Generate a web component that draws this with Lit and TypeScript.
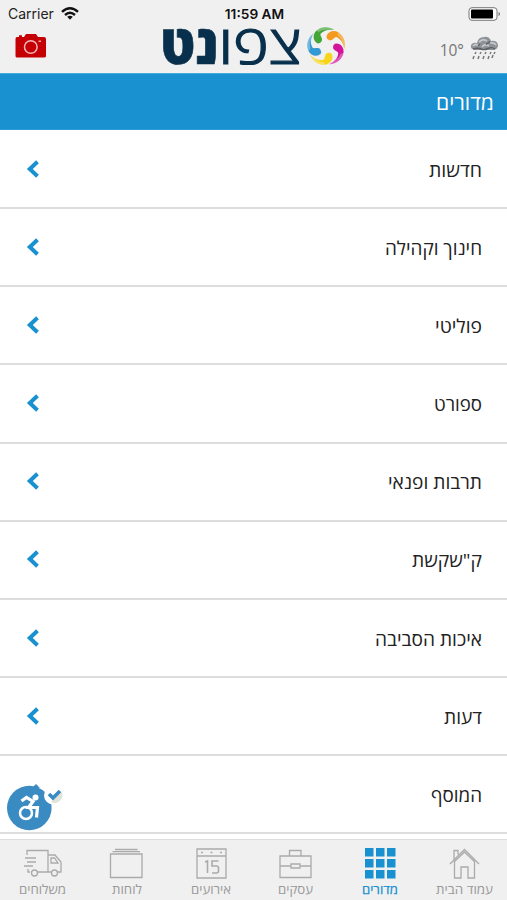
import { LitElement, html, css, svg } from "lit";
import { customElement } from "lit/decorators.js";
import { classMap } from "lit/directives/class-map.js";

const sections = [
  { name: "חדשות", w: 53 },
  { name: "חינוך וקהילה", w: 97 },
  { name: "פוליטי", w: 47 },
  { name: "ספורט", w: 48 },
  { name: "תרבות ופנאי", w: 94 },
  { name: "ק\"שקשת", w: 70 },
  { name: "איכות הסביבה", w: 107 },
  { name: "דעות", w: 38 },
  { name: "המוסף", w: 51 },
];

const cells = [0, 11, 22];

const icons = {
  home: svg`<path d="M5 20 19.500 5.500 34 20M9 16V6.500h4v4M9.500 17.500V34h6.500V23h7v11h6.500V17.500L19.500 8z"/>`,
  grid: svg`<g class="solid">${cells.map((y) => cells.map((x) => svg`<rect x=${x + 4} y=${y + 4} width="8.500" height="8.500"/>`))}</g>`,
  case: svg`<path d="M4 12h31v21.500H4zM13.500 12V6.500h11.500V12M4 22h11M24 22h11M15 20h9v4h-9z"/>`,
  calendar: svg`<path d="M5 5h29v29H5zM5 12h29M9 8.500h2M18.500 8.500h2M28 8.500h2"/><path d="M13 18l2.500-1v12M26.500 17H20v5h4.500q2 0 2 2v3q0 2-2 2H20" stroke-width="1.600"/>`,
  boards: svg`<path d="M3.500 10h31.500v23.500H3.500zM5.500 7.700h27.500M8 5.500h22.500"/>`,
  truck: svg`<path d="M4 11V6.500h21V28H14.500M25 11h7l6 7v10h-3.500M29 28h-4M28 14h3.500l3.500 5h-7zM7 28h-2v-3M2 14h11M4 18h9M1 22h9"/><circle cx="11.500" cy="29" r="3"/><circle cx="31.500" cy="29" r="3"/>`,
};

const tabs = [
  { name: "עמוד הבית", icon: icons.home, w: 57 },
  { name: "מדורים", icon: icons.grid, active: true, w: 36 },
  { name: "עסקים", icon: icons.case, w: 35 },
  { name: "אירועים", icon: icons.calendar, w: 40 },
  { name: "לוחות", icon: icons.boards, w: 30 },
  { name: "משלוחים", icon: icons.truck, w: 47 },
];

// Hebrew label condensed to a given width; the right edge is the anchor.
const label = (text: string, w: number, h: number, base: number) => html`
  <svg class="label" width=${w} height=${h} direction="rtl">
    <text x=${w} y=${base} textLength=${w} lengthAdjust="spacingAndGlyphs">${text}</text>
  </svg>`;

@customElement("app-root")
export class AppRoot extends LitElement {
  static styles = css`
    :host {
      display: flex;
      flex-direction: column;
      position: relative;
      box-sizing: border-box;
      height: 900px;
      overflow: hidden;
      background: #fff;
      font-family: "Open Sans", "Noto Sans", sans-serif;
      color: #222;
    }
    svg { display: block; overflow: visible; flex: none; }
    .top { flex: none; height: 73px; background: #f0f0f0; border-bottom: 1px solid #46abdf; }
    .status {
      display: grid;
      grid-template-columns: 1fr auto 1fr;
      align-items: center;
      height: 27px;
      padding: 0 7px 0 8px;
      font-family: Inter, sans-serif;
      font-size: 14px;
    }
    .carrier { display: flex; align-items: center; gap: 7px; }
    .time { font-weight: 600; font-size: 13.7px; color: #111; padding-left: 1px; }
    .battery { justify-self: end; }
    .brand {
      display: grid;
      grid-template-columns: 147px 183px 1fr;
      height: 46px;
      padding: 0 8px 0 15px;
    }
    .camera { margin-top: 6px; }
    .weather { display: flex; justify-content: flex-end; gap: 6px; padding-top: 9px; }
    .temp { font-size: 15.500px; line-height: 28px; color: #777; }
    .logo { fill: #082f4c; }
    .light { font-size: 54px; font-weight: 300; stroke: #082f4c; stroke-width: 1.2; }
    .heavy { font-size: 54px; font-weight: 800; stroke: #082f4c; stroke-width: .6; }
    .title {
      flex: none;
      display: flex;
      direction: rtl;
      align-items: center;
      box-sizing: border-box;
      height: 56px;
      padding: 2px 13px 0;
      background: #1990d0;
      border-bottom: 1px solid #2f9cd7;
      font-size: 21px;
      fill: #fff;
    }
    .list { flex: 1; overflow: hidden; direction: rtl; padding-top: 1px; }
    .row {
      display: flex;
      align-items: center;
      justify-content: space-between;
      box-sizing: border-box;
      height: 78.170px;
      padding: 1px 25px 0 27px;
      border-bottom: 2px solid #ddd;
      font-size: 19px;
      fill: #222;
    }
    .chevron { fill: none; stroke: #1990d0; stroke-width: 4; margin-bottom: 2px; }
    .tabs {
      flex: none;
      display: grid;
      grid-template-columns: repeat(6, 1fr);
      direction: rtl;
      box-sizing: border-box;
      height: 61px;
      border-top: 1px solid #ddd;
      background: #f0f0f0;
    }
    .tab {
      display: flex;
      flex-direction: column;
      align-items: center;
      padding-top: 4px;
      font-size: 13px;
      fill: #999;
    }
    .tab.active { fill: #1990d0; stroke: #1990d0; stroke-width: .25; }
    .glyph { fill: none; stroke: #aaa; stroke-width: 1.300; }
    .solid { fill: #1990d0; stroke: none; }
    .access { position: absolute; left: 6px; top: 783px; }
  `;

  render() {
    return html`
      <header class="top">
        <div class="status">
          <div class="carrier">
            <span>Carrier</span>
            <svg width="18" height="13" viewBox="0 0 18 13" fill="none" stroke="#111" stroke-width="2.400">
              <path d="M1 4.800Q9-2.400 17 4.800M4 8Q9 3.600 14 8"/>
              <path d="M6.200 9.700Q9 7.700 11.800 9.700L9 12.700z" fill="#111" stroke="none"/>
            </svg>
          </div>
          <div class="time">11:59 AM</div>
          <svg class="battery" width="32" height="14" viewBox="0 0 32 14">
            <rect x="1" y=".7" width="28" height="12.600" rx="3" fill="#fff" stroke="#777"/>
            <rect x="3" y="2.500" width="22" height="9" rx="1"/>
            <path d="M30.500 5v4q1.500-.5 1.500-2t-1.500-2" fill="#777"/>
          </svg>
        </div>
        <div class="brand">
          <svg class="camera" width="32" height="26" viewBox="0 0 32 26">
            <path d="M2 4h7l2-3h10l2 3h6q2 0 2 2v17q0 1.500-2 1.500H2Q.5 24.500.5 23V6Q.5 4 2 4zM4 2.300h3V4H4z" fill="#c50005"/>
            <circle cx="15.800" cy="14" r="6.300" fill="none" stroke="#f4b8ba" stroke-width="1.500"/>
            <path d="M23.500 8.200h2.500" stroke="#fff"/>
          </svg>
          <svg class="logo" width="183" height="46" viewBox="0 0 183 46" direction="rtl">
            <text class="light" x="139.500" y="37" textLength="83" lengthAdjust="spacingAndGlyphs">צפו</text>
            <text class="heavy" x="57" y="37" textLength="59" lengthAdjust="spacingAndGlyphs">נט</text>
            <g transform="translate(164.300 19.300) scale(.97)">
              ${["#f39a20", "#d4129a", "#f6d51c", "#3299d2", "#45a638"].map((c, i) => svg`
                <g transform="rotate(${24 + i * 72})">
                  <path d="M-4-10C-4.500-15 0-18.700 5-18.300 12-17.500 17-12 18-5 15-10 11-13 6-13 3.500-13 4-7 0-7-2.500-7-3.800-8-4-10z" fill=${c}/>
                  <path d="M5-18.300C12-17.500 17-12 18-5 14-11 10-14.500 6-15.500z" fill="#fff" opacity=".3"/>
                </g>`)}
            </g>
          </svg>
          <div class="weather">
            <span class="temp">10°</span>
            <svg width="29" height="24" viewBox="0 0 29 24">
              <path d="M5 14Q0 13 1 9.500 2 6 7 7 8 1 14 1q5-1 7 4 6-1 7 4 0 4-4 5z" fill="#8d9297"/>
              <path d="M9 6q4-4 8-1M20 7q4-1 6 2M3 10q3-3 6 0M12 11q3-4 7-1" fill="none" stroke="#c4c7ca" stroke-width="1.800"/>
              <path d="M3 13q5-1.500 8 0t7-.5 7 .5M20 5.500l-4 3M10 8l-2 2" fill="none" stroke="#5c6065" stroke-width="1.400"/>
              <path d="M6 16l-1 2M11 16l-1 2M16 16l-1 2M21 16l-1 2M25 16l-1 2M4 20l-1 3M9 20l-1 3M14 20l-1 3M19 20l-1 3M23 19l-1 3" stroke="#777" stroke-width="1.500"/>
            </svg>
          </div>
        </div>
      </header>
      <div class="title">${label("מדורים", 58, 28, 21)}</div>
      <main class="list">
        ${sections.map((s) => html`
          <div class="row">
            ${label(s.name, s.w, 26, 19.5)}
            <svg class="chevron" width="13" height="18" viewBox="0 0 13 18"><path d="M10.500 1.800 2.800 9l7.700 7.200"/></svg>
          </div>`)}
      </main>
      <nav class="tabs">
        ${tabs.map((t) => html`
          <div class=${classMap({ tab: true, active: !!t.active })}>
            <svg class="glyph" width="39" height="38" viewBox="0 0 39 38">${t.icon}</svg>
            ${label(t.name, t.w, 18, 12)}
          </div>`)}
      </nav>
      <svg class="access" width="58" height="48" viewBox="0 0 58 48">
        <path d="M27 4l3-3 4 4z" fill="#3b8bc3"/>
        <circle cx="23.300" cy="25" r="22.300" fill="#3b8bc3"/>
        <circle cx="47" cy="12.500" r="9" fill="#fff"/>
        <path d="M56 9a8 8 0 0 1-11 10z" fill="#dfe3d8"/>
        <path d="M43 11l4 4 7-7" fill="none" stroke="#3b8bc3" stroke-width="3.600"/>
        <circle cx="29.500" cy="14.500" r="3" fill="#fff"/>
        <g fill="none" stroke="#fff" stroke-width="3.200">
          <path d="M15.500 18l5-3.500 6.500 4-4.500 6h9l-1 10"/>
          <circle cx="20" cy="30" r="6" stroke-width="2.500"/>
        </g>
      </svg>
    `;
  }
}
